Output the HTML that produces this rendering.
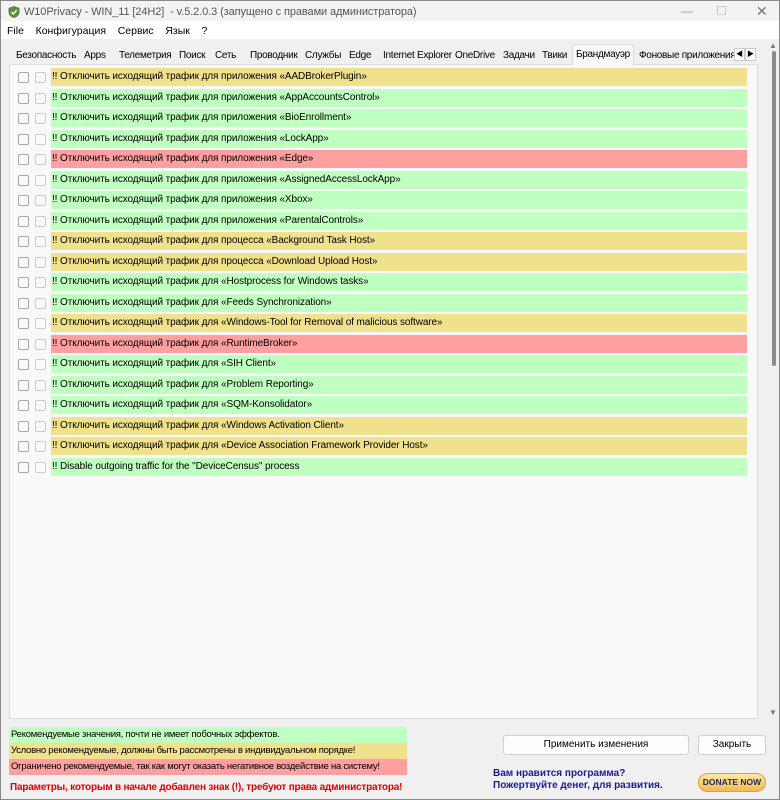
<!DOCTYPE html>
<html><head><meta charset="utf-8"><style>
*{margin:0;padding:0;box-sizing:border-box}
body{width:780px;height:800px;background:#f0f0f0;font-family:"Liberation Sans","Noto Sans CJK SC",sans-serif;font-size:11px;color:#000;position:relative;overflow:hidden;border:1px solid #8a8a8a}
.a{position:absolute;white-space:nowrap}
.title{left:0;top:0;width:778px;height:22px;background:#f3f3f3}
.menu{left:0;top:20px;width:778px;height:18px;background:#fff}
.tab{position:absolute;top:46px;height:17px;font-size:10px;letter-spacing:-0.3px;line-height:17px;padding:0 3px;background:#f0f0f0}
.page{left:8px;top:63px;width:749px;height:655px;background:#f9f9f9;border:1px solid #dcdcdc}
.row{position:absolute;left:50px;width:696px;height:18px;font-size:10px;letter-spacing:-0.1px;line-height:18px;padding-left:1px}
.cb{position:absolute;width:11px;height:11px;border:1px solid #a8a8a8;background:#fafafa;border-radius:2px}
.g{background:#bfffbf}.y{background:#f0e18c}.r{background:#ff9f9f}
.btn{position:absolute;background:#fdfdfd;border:1px solid #d0d0d0;border-radius:3px;text-align:center;font-size:10px;line-height:18px}
.lg{font-size:9.5px;letter-spacing:-0.25px}
</style></head><body>
<div class="a title"></div>
<svg class="a" style="left:6px;top:4px" width="14" height="14" viewBox="0 0 14 14"><path d="M7 1L12.5 3V7C12.5 10 10 12.3 7 13 4 12.3 1.5 10 1.5 7V3Z" fill="#5a8a3a"/><path d="M4.3 7L6.3 9 9.8 5" stroke="#fff" stroke-width="1.5" fill="none"/></svg>
<div class="a" style="left:23px;top:5px;font-size:11px;letter-spacing:-0.1px;color:#555">W10Privacy - WIN_11 [24H2]&nbsp; - v.5.2.0.3 (запущено с правами администратора)</div>
<div class="a" style="left:680px;top:3px;color:#999;font-size:12px">—</div>
<div class="a" style="left:716px;top:5px;width:9px;height:9px;border:1px solid #ccc"></div>
<div class="a" style="left:755px;top:2px;color:#777;font-size:14px">✕</div>
<div class="a menu"></div>
<div class="a" style="left:6px;top:24px;font-size:10.5px">File&nbsp;&nbsp;&nbsp; Конфигурация&nbsp;&nbsp;&nbsp; Сервис&nbsp;&nbsp;&nbsp; Язык&nbsp;&nbsp;&nbsp; ?</div>
<div class="a page"></div>
<div class="tab" style="left:12px">Безопасность</div>
<div class="tab" style="left:80px">Apps</div>
<div class="tab" style="left:115px">Телеметрия</div>
<div class="tab" style="left:175px">Поиск</div>
<div class="tab" style="left:211px">Сеть</div>
<div class="tab" style="left:246px">Проводник</div>
<div class="tab" style="left:301px">Службы</div>
<div class="tab" style="left:345px">Edge</div>
<div class="tab" style="left:379px">Internet Explorer</div>
<div class="tab" style="left:451px">OneDrive</div>
<div class="tab" style="left:499px">Задачи</div>
<div class="tab" style="left:538px">Твики</div>
<div class="tab" style="left:571px;top:43px;height:21px;background:#f9f9f9;border:1px solid #dcdcdc;border-bottom:none;line-height:19px">Брандмауэр</div>
<div class="tab" style="left:635px">Фоновые приложения</div>
<div class="a" style="left:733px;top:47px;width:11px;height:13px;border:1px solid #ccc;background:#fff;font-size:7px;line-height:11px;text-align:center">◀</div>
<div class="a" style="left:744px;top:47px;width:11px;height:13px;border:1px solid #ccc;background:#fff;font-size:7px;line-height:11px;text-align:center">▶</div>
<div class="a" style="left:768px;top:40px;font-size:8px;color:#777">▲</div>
<div class="a" style="left:771px;top:50px;width:4px;height:315px;background:#8a8a8a;border-radius:2px"></div>
<div class="a" style="left:768px;top:707px;font-size:8px;color:#777">▼</div>
<div id="rows"></div>
<script>
var d=[["y","для приложения «AADBrokerPlugin»"],["g","для приложения «AppAccountsControl»"],["g","для приложения «BioEnrollment»"],["g","для приложения «LockApp»"],["r","для приложения «Edge»"],["g","для приложения «AssignedAccessLockApp»"],["g","для приложения «Xbox»"],["g","для приложения «ParentalControls»"],["y","для процесса «Background Task Host»"],["y","для процесса «Download Upload Host»"],["g","для «Hostprocess for Windows tasks»"],["g","для «Feeds Synchronization»"],["y","для «Windows-Tool for Removal of malicious software»"],["r","для «RuntimeBroker»"],["g","для «SIH Client»"],["g","для «Problem Reporting»"],["g","для «SQM-Konsolidator»"],["y","для «Windows Activation Client»"],["y","для «Device Association Framework Provider Host»"],["g",null]];
var h="";d.forEach(function(r,i){var t=67+i*20.5;
h+='<div class="cb" style="left:17px;top:'+(t+4)+'px"></div><div class="cb" style="left:34px;top:'+(t+4)+'px;border-color:#ccc"></div>';
h+='<div class="row '+r[0]+'" style="top:'+t+'px">!! '+(r[1]?'Отключить исходящий трафик '+r[1]:'Disable outgoing traffic for the "DeviceCensus" process')+'</div>';});
document.getElementById("rows").innerHTML=h;
</script>
<div class="a g lg" style="left:8px;top:726px;width:398px;height:16px;line-height:16px;padding-left:2px">Рекомендуемые значения, почти не имеет побочных эффектов.</div>
<div class="a y lg" style="left:8px;top:742px;width:398px;height:16px;line-height:16px;padding-left:2px">Условно рекомендуемые, должны быть рассмотрены в индивидуальном порядке!</div>
<div class="a r lg" style="left:8px;top:758px;width:398px;height:16px;line-height:16px;padding-left:2px">Ограничено рекомендуемые, так как могут оказать негативное воздействие на систему!</div>
<div class="a" style="left:9px;top:781px;font-size:10px;letter-spacing:-0.2px;font-weight:bold;color:#e00000">Параметры, которым в начале добавлен знак (!), требуют права администратора!</div>
<div class="btn" style="left:502px;top:734px;width:186px;height:20px">Применить изменения</div>
<div class="btn" style="left:697px;top:734px;width:68px;height:20px">Закрыть</div>
<div class="a" style="left:492px;top:767px;font-size:10px;font-weight:bold;color:#1a1aa0;line-height:12px">Вам нравится программа?<br>Пожертвуйте денег, для развития.</div>
<div class="a" style="left:697px;top:772px;width:68px;height:19px;border-radius:10px;background:linear-gradient(#ffe9a8,#f8b848);border:1px solid #e0a040;font-size:8.5px;font-weight:bold;color:#1a2a5a;text-align:center;line-height:17px">DONATE NOW</div>
</body></html>
